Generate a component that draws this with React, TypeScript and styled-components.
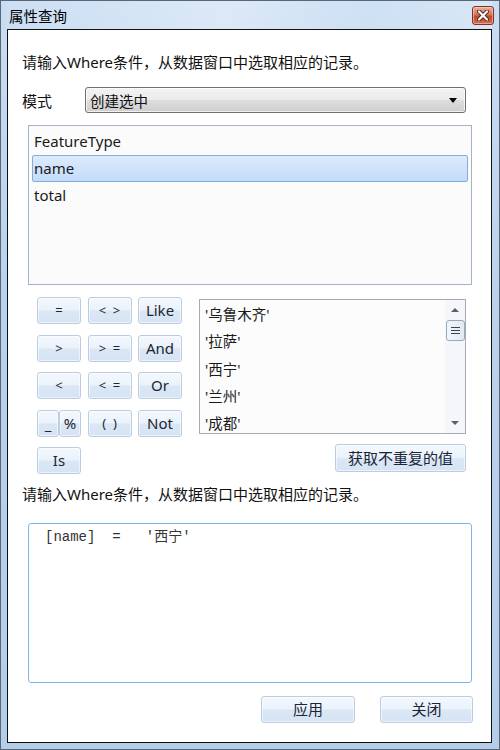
import React from "react";
import styled, { createGlobalStyle, css } from "styled-components";

const Global = createGlobalStyle`
  html, body { margin: 0; padding: 0; background: #ffffff; }
  body { font-family: "Noto Sans", "Noto Sans CJK SC", sans-serif; }
  * { box-sizing: border-box; }
`;

const Window = styled.div`
  width: 500px;
  height: 750px;
  display: flex;
  flex-direction: column;
  border: 1px solid #5a6675;
  padding: 0 7px 6px 6px;
  background: linear-gradient(180deg, #c9ddf3 0%, #bad2ec 40%, #b4cde9 100%);
`;

const TitleBar = styled.div`
  height: 28px;
  display: flex;
  align-items: flex-start;
  justify-content: space-between;
  padding: 5px 0 0 2px;
  background: linear-gradient(90deg, rgba(255,255,255,0.05) 0%, rgba(255,255,255,0.35) 45%, rgba(255,255,255,0.1) 75%, rgba(255,255,255,0.3) 100%);
`;

const TitleText = styled.div`
  font-size: 14.5px;
  line-height: 19px;
  color: #000;
  font-family: "Noto Sans CJK SC", sans-serif;
`;

const CloseBtn = styled.div`
  width: 22px;
  height: 19px;
  margin-right: -2px;
  border: 1px solid #7a3527;
  border-radius: 3px;
  display: flex;
  align-items: center;
  justify-content: center;
  background: linear-gradient(180deg, #eab0a0 0%, #d9735a 45%, #c8462a 55%, #d8704f 100%);
  box-shadow: inset 0 0 0 1px rgba(255, 220, 210, 0.5);
`;

const Client = styled.div`
  flex: 1;
  background: #ffffff;
  border: 1px solid #111;
  display: flex;
  flex-direction: column;
`;

const Label = styled.div<{ $top: number }>`
  margin: ${(p) => p.$top}px 0 0 14px;
  height: 20px;
  line-height: 20px;
  font-size: 15px;
  color: #111;
  font-family: "Noto Sans", "Noto Sans CJK SC", sans-serif;
`;

const ModeRow = styled.div`
  margin-top: 15px;
  padding-left: 14px;
  height: 26px;
  display: flex;
  align-items: center;
`;

const ModeLabel = styled.div`
  width: 63px;
  font-size: 15px;
  color: #111;
  font-family: "Noto Sans CJK SC", sans-serif;
`;

const Select = styled.div`
  width: 381px;
  height: 26px;
  border: 1px solid #707070;
  border-radius: 3px;
  display: flex;
  align-items: center;
  justify-content: space-between;
  padding: 0 8px 0 4px;
  font-size: 14.5px;
  color: #111;
  font-family: "Noto Sans CJK SC", sans-serif;
  background: linear-gradient(180deg, #f3f3f3 0%, #ebebeb 48%, #dddddd 52%, #cfcfcf 100%);
  box-shadow: inset 0 0 0 1px rgba(255,255,255,0.7);
`;

const Arrow = styled.div`
  width: 0;
  height: 0;
  border-left: 4px solid transparent;
  border-right: 4px solid transparent;
  border-top: 5px solid #000;
`;

const ListBox = styled.div`
  margin: 12px 0 0 20px;
  width: 444px;
  height: 160px;
  border: 1px solid #a5b3c6;
  background: #fbfbfb;
  padding: 2px 3px;
`;

const ListItem = styled.div<{ $selected?: boolean }>`
  height: 27px;
  line-height: 25px;
  padding-left: 1px;
  border: 1px solid transparent;
  border-radius: 2px;
  font-size: 15px;
  color: #1a1a1a;
  ${(p) =>
    p.$selected &&
    css`
      border-color: #84acdd;
      background: linear-gradient(180deg, #dcebfc 0%, #c3dcfb 100%);
    `}
`;

const Middle = styled.div`
  margin-top: 12px;
  display: flex;
  align-items: flex-start;
`;

const OpGrid = styled.div`
  margin-left: 29px;
  display: grid;
  grid-template-columns: 44px 44px 44px;
  grid-auto-rows: 27px;
  column-gap: 6.5px;
  row-gap: 10.5px;
`;

const Button = styled.button<{ $w?: number; $h?: number; $small?: boolean }>`
  width: ${(p) => (p.$w ? `${p.$w}px` : "100%")};
  height: ${(p) => (p.$h ? `${p.$h}px` : "100%")};
  margin: 0;
  padding: 0;
  border: 1px solid #bccde2;
  border-radius: 3px;
  background: linear-gradient(180deg, #f3f8fd 0%, #eaf2fb 48%, #dbe7f5 52%, #d5e3f3 100%);
  box-shadow: inset 0 0 0 1px rgba(255,255,255,0.55);
  color: #1c2534;
  font-family: "Noto Sans", "Noto Sans CJK SC", sans-serif;
  font-size: ${(p) => (p.$small ? "13px" : "15px")};
  line-height: 1;
  display: flex;
  align-items: center;
  justify-content: center;
  white-space: pre;
`;

const SplitCell = styled.div`
  display: flex;
`;

const RightCol = styled.div`
  margin-left: 17px;
  padding-top: 2px;
  width: 267px;
  display: flex;
  flex-direction: column;
  align-items: flex-end;
`;

const ValueList = styled.div`
  width: 267px;
  height: 135px;
  border: 1px solid #a5acb7;
  background: #fcfcfd;
  display: flex;
  overflow: hidden;
`;

const ValueItems = styled.div`
  flex: 1;
  padding: 1px 0 0 5px;
`;

const ValueItem = styled.div`
  height: 27.3px;
  line-height: 27px;
  font-size: 14.5px;
  color: #1a1a1a;
  font-family: "Noto Sans", "Noto Sans CJK SC", sans-serif;
`;

const ScrollBar = styled.div`
  width: 20px;
  display: flex;
  flex-direction: column;
  align-items: center;
  background: #f4f6fa;
`;

const ScrollArrow = styled.div<{ $down?: boolean }>`
  height: 20px;
  width: 100%;
  display: flex;
  align-items: center;
  justify-content: center;
  &::after {
    content: "";
    border-left: 4px solid transparent;
    border-right: 4px solid transparent;
    ${(p) =>
      p.$down
        ? css`border-top: 4px solid #5a5f66;`
        : css`border-bottom: 4px solid #5a5f66;`}
  }
`;

const Thumb = styled.div`
  width: 19px;
  height: 21px;
  border: 1px solid #98a8bd;
  border-radius: 3px;
  background: linear-gradient(90deg, #f3f6fa 0%, #e3e9f1 100%);
  display: flex;
  flex-direction: column;
  align-items: center;
  justify-content: center;
  gap: 2px;
`;

const Grip = styled.div`
  width: 9px;
  height: 1px;
  background: #39455a;
`;

const Spacer = styled.div`
  flex: 1;
`;

const Editor = styled.div`
  margin: 19px 0 0 20px;
  width: 444px;
  height: 160px;
  border: 1px solid #80b5ea;
  border-radius: 3px;
  padding: 4px 0 0 16px;
  font-family: "Liberation Mono", "Noto Sans CJK SC", monospace;
  font-size: 14px;
  line-height: 18px;
  color: #333;
  white-space: pre;
`;

const Footer = styled.div`
  margin-top: 13px;
  padding-right: 18px;
  display: flex;
  justify-content: flex-end;
  gap: 25px;
`;

const ops: { label: string; small?: boolean }[] = [
  { label: "=", small: true },
  { label: "<  >", small: true },
  { label: "Like" },
  { label: ">", small: true },
  { label: ">  =", small: true },
  { label: "And" },
  { label: "<", small: true },
  { label: "<  =", small: true },
  { label: "Or" },
];

const values = ["'乌鲁木齐'", "'拉萨'", "'西宁'", "'兰州'", "'成都'"];

export default function App() {
  return (
    <>
      <Global />
      <Window>
        <TitleBar>
          <TitleText>属性查询</TitleText>
          <CloseBtn>
            <svg width="12" height="11" viewBox="0 0 12 11">
              <path d="M2 1.5 L10 9.5 M10 1.5 L2 9.5" stroke="#4a2a24" strokeWidth="4" strokeLinecap="round" />
              <path d="M2 1.5 L10 9.5 M10 1.5 L2 9.5" stroke="#ffffff" strokeWidth="2.2" strokeLinecap="round" />
            </svg>
          </CloseBtn>
        </TitleBar>
        <Client>
          <Label $top={22}>请输入Where条件，从数据窗口中选取相应的记录。</Label>
          <ModeRow>
            <ModeLabel>模式</ModeLabel>
            <Select>
              <span>创建选中</span>
              <Arrow />
            </Select>
          </ModeRow>
          <ListBox>
            <ListItem>FeatureType</ListItem>
            <ListItem $selected>name</ListItem>
            <ListItem>total</ListItem>
          </ListBox>
          <Middle>
            <OpGrid>
              {ops.map((o) => (
                <Button key={o.label} $small={o.small}>
                  {o.label}
                </Button>
              ))}
              <SplitCell>
                <Button $w={22}>
                  <span style={{ alignSelf: "flex-end", paddingBottom: 4 }}>_</span>
                </Button>
                <Button $w={22}>%</Button>
              </SplitCell>
              <Button $small>(  )</Button>
              <Button>Not</Button>
              <Button>Is</Button>
            </OpGrid>
            <RightCol>
              <ValueList>
                <ValueItems>
                  {values.map((v) => (
                    <ValueItem key={v}>{v}</ValueItem>
                  ))}
                </ValueItems>
                <ScrollBar>
                  <ScrollArrow />
                  <Thumb>
                    <Grip />
                    <Grip />
                    <Grip />
                  </Thumb>
                  <Spacer />
                  <ScrollArrow $down />
                </ScrollBar>
              </ValueList>
              <div style={{ height: 10 }} />
              <Button $w={131} $h={28}>获取不重复的值</Button>
            </RightCol>
          </Middle>
          <Label $top={10}>请输入Where条件，从数据窗口中选取相应的记录。</Label>
          <Editor>{"[name]  =   '西宁'"}</Editor>
          <Footer>
            <Button $w={94} $h={27}>应用</Button>
            <Button $w={93} $h={27}>关闭</Button>
          </Footer>
        </Client>
      </Window>
    </>
  );
}
